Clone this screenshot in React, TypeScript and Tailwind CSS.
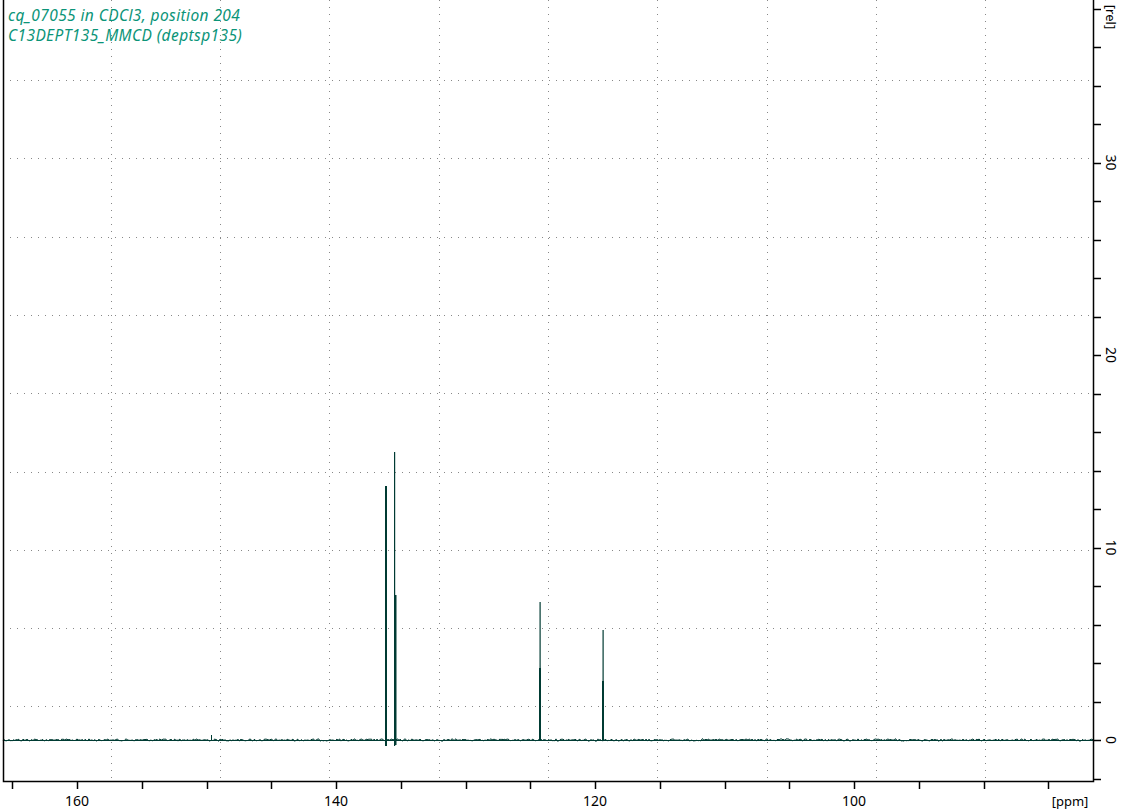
import React from "react";

const L = 3, R = 1093, B = 781, Y0 = 740;
const px = (ppm: number) => 77 + (160 - ppm) * 12.95;
const py = (v: number) => Y0 - v * 19.25;

function noisePath() {
  let s = 12345;
  const rnd = () => { s = (s * 1103515245 + 12345) & 0x7fffffff; return s / 0x7fffffff; };
  let d = `M${L} ${Y0}`;
  for (let x = L; x <= R; x += 1) {
    const n = (rnd() - 0.5) * 2.2;
    d += ` L${x} ${(Y0 + n).toFixed(1)}`;
  }
  return d;
}

export default function App() {
  const hGrid = [80, 158, 237, 315, 393, 472, 550, 628, 706];
  const vGrid = [111, 220, 329, 439, 548, 657, 767, 876, 985];
  const xTicks: number[] = [];
  for (let p = 165; p >= 80; p -= 5) { const x = px(p); if (x > L && x < R) xTicks.push(p); }
  const yTicks: number[] = [];
  for (let v = 0; v <= 40; v += 2) { const y = py(v); if (y > 2 && y <= B) yTicks.push(v); }
  yTicks.push(-2);
  const c = "#003b33";
  return (
    <div className="w-[1124px] h-[811px] bg-white overflow-hidden font-['DejaVu_Sans',sans-serif]">
      <svg width="1124" height="811" viewBox="0 0 1124 811">
        {hGrid.map((y) => (
          <line key={"h" + y} x1={L} x2={R} y1={y + 0.5} y2={y + 0.5} stroke="#888" strokeDasharray="1 6" />
        ))}
        {vGrid.map((x) => (
          <line key={"v" + x} x1={x + 0.5} x2={x + 0.5} y1={0} y2={B} stroke="#888" strokeDasharray="1 6" />
        ))}
        <path d={noisePath()} stroke={c} strokeWidth="1" fill="none" />
        <line x1={L} x2={R} y1={Y0 + 0.5} y2={Y0 + 0.5} stroke={c} />
        <rect x={385} y={486} width={2} height={260} fill={c} />
        <rect x={394} y={452} width={1.2} height={294} fill={c} />
        <rect x={395} y={595} width={1.5} height={150} fill={c} />
        <rect x={539.5} y={602} width={1.2} height={139} fill={c} />
        <rect x={539} y={668} width={2} height={73} fill={c} />
        <rect x={602.5} y={630} width={1.2} height={111} fill={c} />
        <rect x={602} y={681} width={2} height={60} fill={c} />
        <rect x={211} y={735} width={1} height={6} fill={c} />
        <polyline points={`${L + 0.5},0 ${L + 0.5},${B + 0.5} ${R + 0.5},${B + 0.5} ${R + 0.5},0`} fill="none" stroke="#000" strokeWidth="1.5" />
        {xTicks.map((p) => {
          const x = Math.round(px(p)) + 0.5;
          return <line key={"xt" + p} x1={x} x2={x} y1={B} y2={B + 8} stroke="#000" strokeWidth="1.5" />;
        })}
        {[160, 140, 120, 100].map((p) => (
          <text key={"xl" + p} x={px(p)} y={806} fontSize="14" textAnchor="middle" fill="#000">{p}</text>
        ))}
        <text x={1070} y={806} fontSize="13" textAnchor="middle" fill="#000">[ppm]</text>
        {yTicks.map((v) => {
          const y = Math.round(py(v)) + 0.5;
          return <line key={"yt" + v} x1={R} x2={R + 8} y1={y} y2={y} stroke="#000" strokeWidth="1.5" />;
        })}
        {[0, 10, 20, 30].map((v) => (
          <text key={"yl" + v} x={0} y={0} fontSize="14" textAnchor="middle" fill="#000"
            transform={`translate(1106 ${py(v)}) rotate(90)`}>{v}</text>
        ))}
        <text x={0} y={0} fontSize="13" textAnchor="middle" fill="#000" transform="translate(1106 17) rotate(90)">[rel]</text>
        <text x={8} y={21} fontSize="15.5" fontStyle="italic" letterSpacing="0.4" fill="#0b9478">cq_07055 in CDCl3, position 204</text>
        <text x={8} y={41} fontSize="15.5" fontStyle="italic" letterSpacing="0.4" fill="#0b9478">C13DEPT135_MMCD (deptsp135)</text>
      </svg>
    </div>
  );
}
